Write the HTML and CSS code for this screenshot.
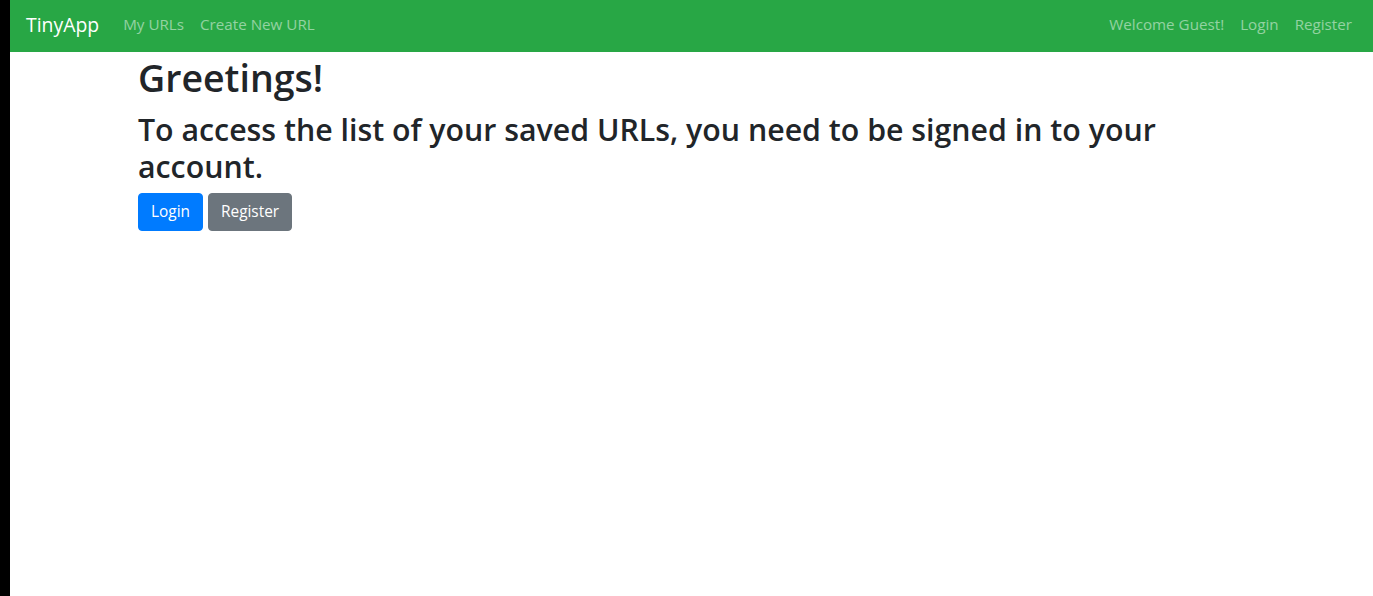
FILE: index.html
```html
<!DOCTYPE html>
<html lang="en">
<head>
<meta charset="utf-8">
<title>TinyApp</title>
<link rel="stylesheet" href="styles.css">
</head>
<body>
<div class="page">
  <nav class="navbar">
    <div class="nav-left">
      <a class="brand" href="#">TinyApp</a>
      <a class="nav-link" href="#">My URLs</a>
      <a class="nav-link" href="#">Create New URL</a>
    </div>
    <div class="nav-right">
      <span class="nav-link">Welcome Guest!</span>
      <a class="nav-link" href="#">Login</a>
      <a class="nav-link" href="#">Register</a>
    </div>
  </nav>
  <main class="container">
    <h1 class="title">Greetings!</h1>
    <h2 class="subtitle">To access the list of your saved URLs, you need to be signed in to your account.</h2>
    <div class="actions">
      <a class="btn btn-primary" href="#">Login</a>
      <a class="btn btn-secondary" href="#">Register</a>
    </div>
  </main>
</div>
</body>
</html>
```
FILE: styles.css
```css
html, body {
  margin: 0;
  padding: 0;
  height: 100%;
}
body {
  background: #000;
  font-family: "Open Sans", "Noto Sans", sans-serif;
  color: #212529;
}
.page {
  margin-left: 10px;
  background: #fff;
  min-height: 100%;
}
.navbar {
  display: flex;
  justify-content: space-between;
  align-items: center;
  height: 52px;
  padding: 0 16px 4px;
  background: #28a745;
  box-sizing: border-box;
}
.nav-left, .nav-right {
  display: flex;
  align-items: center;
}
.brand {
  color: #fff;
  font-size: 19.4px;
  text-decoration: none;
  margin-right: 16px;
}
.nav-link {
  color: rgba(255, 255, 255, 0.5);
  font-size: 15.2px;
  text-decoration: none;
  padding: 0 8px;
}
.nav-right .nav-link:last-child {
  padding-right: 5px;
}
.container {
  padding: 2px 0 0 128px;
  width: 1110px;
}
.title {
  margin: 0 0 9px;
  font-size: 37.5px;
  font-weight: 600;
  line-height: 48px;
}
.subtitle {
  margin: 0 0 8px;
  font-size: 30.3px;
  font-weight: 600;
  line-height: 37px;
}
.actions {
  display: flex;
  gap: 5px;
}
.btn {
  display: inline-block;
  height: 38px;
  line-height: 36px;
  box-sizing: border-box;
  padding: 0 12px;
  border: 1px solid transparent;
  border-radius: 4px;
  font-size: 15.4px;
  color: #fff;
  text-decoration: none;
}
.btn-primary {
  background: #007bff;
  border-color: #007bff;
}
.btn-secondary {
  background: #6c757d;
  border-color: #6c757d;
}
```
